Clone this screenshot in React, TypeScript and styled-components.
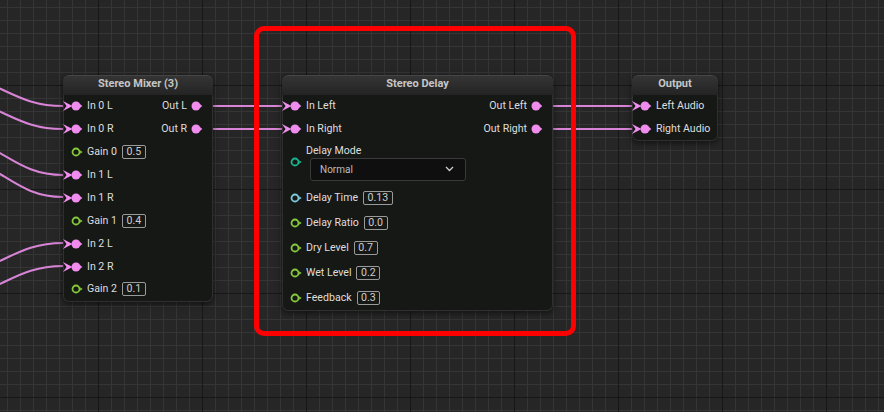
import styled, { createGlobalStyle } from "styled-components"

const AUDIO = "#f08cee"
const WIRE = "#d884d6"
const FLOAT = "#86c93b"
const TIME = "#7ccbdc"
const ENUM = "#19b58f"

const GlobalStyle = createGlobalStyle`
  body {
    margin: 0;
    background: #262626;
    font-family: Roboto, "Noto Sans", sans-serif;
  }
`

type Pin = { label: string; kind?: "audio" | "float"; color?: string; value?: string }

const mixerRows: { input: Pin; output?: string }[] = [
  { input: { label: "In 0 L" }, output: "Out L" },
  { input: { label: "In 0 R" }, output: "Out R" },
  { input: { label: "Gain 0", kind: "float", value: "0.5" } },
  { input: { label: "In 1 L" } },
  { input: { label: "In 1 R" } },
  { input: { label: "Gain 1", kind: "float", value: "0.4" } },
  { input: { label: "In 2 L" } },
  { input: { label: "In 2 R" } },
  { input: { label: "Gain 2", kind: "float", value: "0.1" } },
]

const delayParams: Pin[] = [
  { label: "Delay Time", kind: "float", color: TIME, value: "0.13" },
  { label: "Delay Ratio", kind: "float", value: "0.0" },
  { label: "Dry Level", kind: "float", value: "0.7" },
  { label: "Wet Level", kind: "float", value: "0.2" },
  { label: "Feedback", kind: "float", value: "0.3" },
]

// incoming wires from nodes off to the left of the view
const leftWires = [
  [75, 106],
  [98, 129],
  [136, 175],
  [156, 197],
  [275, 243],
  [298, 266],
]

function AudioInPin() {
  return (
    <PinIcon width={24} height={12} viewBox="0 0 24 12">
      <polygon points="0,1 9.5,6 0,11 3.5,6" fill={AUDIO} />
      <circle cx={13} cy={6} r={4.5} fill={AUDIO} />
      <polygon points="16.8,4 19.3,6 16.8,8" fill={AUDIO} />
    </PinIcon>
  )
}

function AudioOutPin() {
  return (
    <PinIcon width={22} height={12} viewBox="0 0 22 12">
      <circle cx={5} cy={6} r={4.5} fill={AUDIO} />
      <polygon points="8.8,4 11.3,6 8.8,8" fill={AUDIO} />
    </PinIcon>
  )
}

function FloatPin({ color = FLOAT }: { color?: string }) {
  return (
    <PinIcon width={24} height={12} viewBox="0 0 24 12">
      <circle cx={13} cy={6} r={3.5} fill="none" stroke={color} strokeWidth={1.8} />
      <polygon points="17.2,4.2 19.6,6 17.2,7.8" fill={color} />
    </PinIcon>
  )
}

function InputPin({ pin }: { pin: Pin }) {
  return (
    <Side>
      {pin.kind === "float" ? <FloatPin color={pin.color} /> : <AudioInPin />}
      <Label>{pin.label}</Label>
      {pin.value && <ValueBox>{pin.value}</ValueBox>}
    </Side>
  )
}

function OutputPin({ label }: { label: string }) {
  return (
    <Side>
      <Label $right>{label}</Label>
      <AudioOutPin />
    </Side>
  )
}

function App() {
  return (
    <>
      <GlobalStyle />
      <Canvas>
        <WireLayer width={884} height={412}>
          {leftWires.map(([y0, y1], i) => (
            <path key={i} d={`M -60 ${y0} C 0 ${y0}, 10 ${y1}, 63 ${y1}`} />
          ))}
          <path d="M 200 106 L 283 106" />
          <path d="M 200 129 L 283 129" />
          <path d="M 540 106 L 633 106" />
          <path d="M 540 129 L 633 129" />
        </WireLayer>

        <Node $x={63} $y={75} $w={150}>
          <NodeHeader>Stereo Mixer (3)</NodeHeader>
          <NodeBody $pad={1}>
            {mixerRows.map((row) => (
              <PinRow key={row.input.label} $h={22.875}>
                <InputPin pin={row.input} />
                {row.output && <OutputPin label={row.output} />}
              </PinRow>
            ))}
          </NodeBody>
        </Node>

        <Node $x={282} $y={75} $w={271}>
          <NodeHeader>Stereo Delay</NodeHeader>
          <NodeBody $pad={0}>
            <PinRow $h={22.875}>
              <InputPin pin={{ label: "In Left" }} />
              <OutputPin label="Out Left" />
            </PinRow>
            <PinRow $h={22.875}>
              <InputPin pin={{ label: "In Right" }} />
              <OutputPin label="Out Right" />
            </PinRow>
            <EnumBlock>
              <FloatPin color={ENUM} />
              <EnumColumn>
                <Label>Delay Mode</Label>
                <Dropdown>
                  <span>Normal</span>
                  <svg width={9} height={6} viewBox="0 0 9 6">
                    <polyline points="1,1 4.5,4.5 8,1" fill="none" stroke="#cfcfcf" strokeWidth={1.3} />
                  </svg>
                </Dropdown>
              </EnumColumn>
            </EnumBlock>
            {delayParams.map((pin) => (
              <PinRow key={pin.label} $h={25}>
                <InputPin pin={pin} />
              </PinRow>
            ))}
          </NodeBody>
        </Node>

        <Node $x={632} $y={75} $w={86}>
          <NodeHeader>Output</NodeHeader>
          <NodeBody $pad={0}>
            <PinRow $h={22.875}>
              <InputPin pin={{ label: "Left Audio" }} />
            </PinRow>
            <PinRow $h={22.875}>
              <InputPin pin={{ label: "Right Audio" }} />
            </PinRow>
          </NodeBody>
        </Node>

        <SelectionFrame />
      </Canvas>
    </>
  )
}

const Canvas = styled.div`
  position: relative;
  width: 884px;
  height: 412px;
  overflow: hidden;
  background-color: #262626;
  background-image:
    linear-gradient(to right, #171717 1px, transparent 1px),
    linear-gradient(to bottom, #171717 1px, transparent 1px),
    linear-gradient(to right, #353535 1px, transparent 1px),
    linear-gradient(to bottom, #353535 1px, transparent 1px);
  background-size:
    104px 104px,
    104px 104px,
    13px 13px,
    13px 13px;
  background-position:
    98px 85px,
    98px 85px,
    7px 7px,
    7px 7px;
`

const WireLayer = styled.svg`
  position: absolute;
  left: 0;
  top: 0;
  overflow: visible;

  path {
    fill: none;
    stroke: ${WIRE};
    stroke-width: 2;
  }
`

const Node = styled.div<{ $x: number; $y: number; $w: number }>`
  position: absolute;
  left: ${({ $x }) => $x}px;
  top: ${({ $y }) => $y}px;
  width: ${({ $w }) => $w}px;
  display: flex;
  flex-direction: column;
  border-radius: 6px;
  background: #161816;
  box-shadow:
    inset 0 0 0 1px #2f2f2f,
    0 2px 6px rgba(0, 0, 0, 0.55);
  overflow: hidden;
`

const NodeHeader = styled.div`
  height: 20px;
  line-height: 16px;
  text-align: center;
  font-size: 11px;
  font-weight: bold;
  color: #c6c6c6;
  background: linear-gradient(180deg, #343434 0%, #242424 100%);
  border-top: 1px solid #454545;
  box-sizing: border-box;
  border-radius: 6px 6px 0 0;
`

const NodeBody = styled.div<{ $pad: number }>`
  display: flex;
  flex-direction: column;
  padding-bottom: ${({ $pad }) => $pad}px;
`

const PinRow = styled.div<{ $h: number }>`
  height: ${({ $h }) => $h}px;
  display: flex;
  align-items: center;
  justify-content: space-between;
`

const Side = styled.div`
  display: flex;
  align-items: center;
`

const PinIcon = styled.svg`
  flex: none;
  display: block;
  overflow: visible;
`

const Label = styled.span<{ $right?: boolean }>`
  font-size: 10.6px;
  line-height: 14px;
  color: #dedede;
  white-space: nowrap;
  margin-right: ${({ $right }) => ($right ? 4 : 0)}px;
`

const ValueBox = styled.span`
  margin-left: 5px;
  height: 14px;
  box-sizing: border-box;
  padding: 0 3.5px;
  border: 1px solid #9a9a9a;
  border-radius: 2px;
  font-size: 10.6px;
  line-height: 12px;
  color: #cdcdcd;
`

const EnumBlock = styled.div`
  display: flex;
  align-items: center;
  margin: 3px 0 5px;
`

const EnumColumn = styled.div`
  display: flex;
  flex-direction: column;
`

const Dropdown = styled.div`
  margin-left: 4px;
  width: 156px;
  height: 23px;
  box-sizing: border-box;
  display: flex;
  align-items: center;
  justify-content: space-between;
  padding: 0 11px 0 9px;
  background: #0f0f0f;
  border: 1px solid #3a3a3a;
  border-radius: 3px;
  font-size: 10px;
  color: #bdbdbd;
`

const SelectionFrame = styled.div`
  position: absolute;
  left: 254px;
  top: 26px;
  width: 322px;
  height: 310px;
  box-sizing: border-box;
  border: 5px solid #ff0000;
  border-radius: 10px;
  pointer-events: none;
`

export default App
